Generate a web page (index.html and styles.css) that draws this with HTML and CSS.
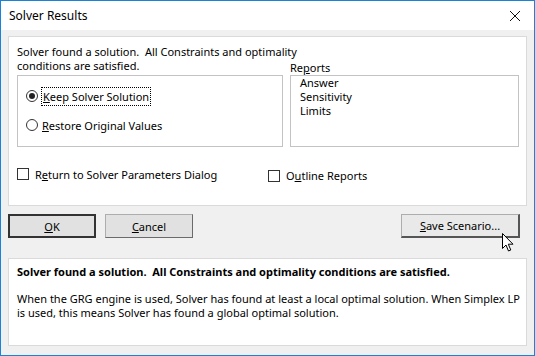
FILE: index.html
```html
<!DOCTYPE html>
<html lang="en">
<head>
    <meta charset="UTF-8">
    <title>Solver Results</title>
    <link rel="stylesheet" href="styles.css">
</head>
<body>
    <div class="window">
        <div class="titlebar">
            <span class="title">Solver Results</span>
            <svg class="close" width="12" height="12" viewBox="0 0 12 12">
                <path d="M1 1 L11 11 M11 1 L1 11" stroke="#111" stroke-width="1" fill="none"/>
            </svg>
        </div>

        <div class="content">
            <div class="panel">
                <div class="top-grid">
                    <p class="message">Solver found a solution.&nbsp; All Constraints and optimality<br>conditions are satisfied.</p>
                    <div class="reports-label">Re<u>p</u>orts</div>

                    <div class="radio-box">
                        <label class="radio checked"><span class="dot"></span><span class="focus"><u>K</u>eep Solver Solution</span></label>
                        <label class="radio"><span class="dot"></span><span><u>R</u>estore Original Values</span></label>
                    </div>
                    <div class="list-box">
                        <div>Answer</div>
                        <div>Sensitivity</div>
                        <div>Limits</div>
                    </div>
                </div>

                <div class="check-row">
                    <label class="check"><span class="box"></span><span>R<u>e</u>turn to Solver Parameters Dialog</span></label>
                    <label class="check right"><span class="box"></span><span>O<u>u</u>tline Reports</span></label>
                </div>
            </div>

            <div class="buttons">
                <button class="btn default"><u>O</u>K</button>
                <button class="btn"><u>C</u>ancel</button>
                <button class="btn save"><u>S</u>ave Scenario...</button>
            </div>

            <div class="panel info">
                <p class="info-title">Solver found a solution.&nbsp; All Constraints and optimality conditions are satisfied.</p>
                <p class="info-text">When the GRG engine is used, Solver has found at least a local optimal solution. When Simplex LP is used, this means Solver has found a global optimal solution.</p>
            </div>
        </div>

        <svg class="cursor" width="13" height="20" viewBox="0 0 13 20">
            <path d="M0.5 0.5 L0.5 15.5 L4 12 L6.5 18 L8.8 17 L6.3 11.2 L11 11.2 Z" fill="#fff" stroke="#000" stroke-width="1"/>
        </svg>
    </div>
</body>
</html>
```

FILE: styles.css
```css
:root {
    --accent: #1883d7;
    --face: #f0f0f0;
    --panel-border: #dadada;
    --box-border: #c3c3c3;
    --text: #000000;
}

* {
    margin: 0;
    padding: 0;
    box-sizing: border-box;
}

body {
    font-family: 'Segoe UI', 'Noto Sans', sans-serif;
    font-size: 11px;
    color: var(--text);
    background: #ffffff;
}

.window {
    position: relative;
    width: 535px;
    height: 356px;
    border: 1px solid var(--accent);
    background: var(--face);
    display: flex;
    flex-direction: column;
}

.titlebar {
    height: 29px;
    background: #ffffff;
    display: flex;
    align-items: center;
    justify-content: space-between;
    padding: 0 13px 0 8px;
}

.title {
    font-size: 12px;
}

.content {
    padding: 6px 7px 0 7px;
}

.panel {
    background: #ffffff;
    border: 1px solid var(--panel-border);
}

.panel:first-child {
    height: 170px;
    padding: 8px 7px 0 8px;
}

.top-grid {
    display: grid;
    grid-template-columns: 266px 229px;
    column-gap: 7px;
}

.message {
    white-space: nowrap;
    line-height: 14px;
    margin-bottom: 2px;
}

.reports-label {
    align-self: end;
    line-height: 14px;
    margin-bottom: 0;
}

.radio-box,
.list-box {
    height: 72px;
    border: 1px solid var(--box-border);
}

.radio-box {
    display: flex;
    flex-direction: column;
    gap: 13px;
    padding: 12px 0 0 8px;
}

.radio {
    display: flex;
    align-items: center;
    gap: 4px;
    height: 16px;
}

.radio .dot {
    width: 12px;
    height: 12px;
    border: 1px solid #333;
    border-radius: 50%;
    display: flex;
    align-items: center;
    justify-content: center;
}

.radio.checked .dot::after {
    content: "";
    width: 6px;
    height: 6px;
    border-radius: 50%;
    background: #222;
}

.focus {
    outline: 1px dotted #000;
    padding: 1px 1px;
}

.list-box {
    padding: 0 0 0 9px;
    line-height: 14px;
}

.check-row {
    display: flex;
    margin-top: 18px;
}

.check {
    display: flex;
    align-items: center;
    gap: 6px;
    width: 273px;
}

.check.right {
    margin-top: 3px;
}

.check .box {
    width: 12px;
    height: 12px;
    border: 1px solid #333;
    background: #fff;
}

.buttons {
    display: flex;
    gap: 9px;
    margin-top: 8px;
    padding-right: 7px;
}

.btn {
    width: 88px;
    height: 24px;
    font-family: inherit;
    font-size: 11px;
    background: #e1e1e1;
    border: 1px solid #adadad;
    border-right-color: #6a6a6a;
    border-bottom-color: #6a6a6a;
}

.btn.default {
    border: 2px solid #333;
}

.btn.save {
    width: 119px;
    margin-left: auto;
    background: #e9e9e9;
    border-right: 2px solid #555;
    border-bottom: 2px solid #555;
}

.panel.info {
    margin-top: 20px;
    height: 88px;
    padding: 6px 2px 6px 8px;
}

.info-title {
    font-weight: bold;
    line-height: 14px;
    margin-bottom: 13px;
}

.info-text {
    line-height: 14px;
}

.cursor {
    position: absolute;
    left: 501px;
    top: 232px;
}
```
